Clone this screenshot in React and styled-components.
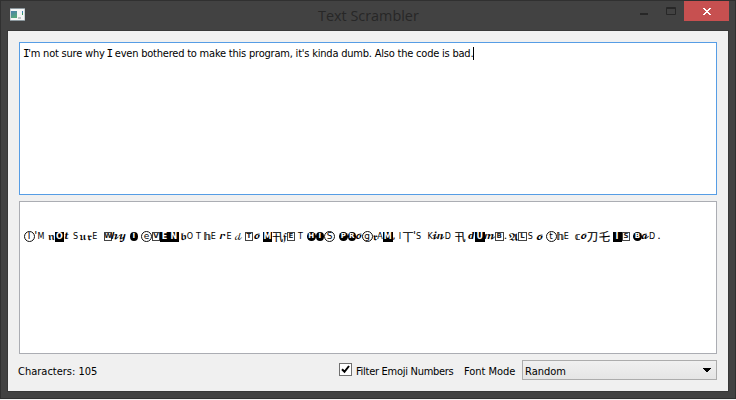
import React from "react";
import styled, { createGlobalStyle, css } from "styled-components";

const Global = createGlobalStyle`
  * { box-sizing: border-box; }
  body { margin: 0; background: #f4f4f4; }
`;

const ui = css`
  font-family: "DejaVu Sans Condensed", "DejaVu Sans", sans-serif;
  font-stretch: condensed;
  font-size: 11px;
  line-height: 14px;
  color: #000;
  white-space: pre;
`;

const Window = styled.div`
  width: 736px;
  height: 399px;
  display: flex;
  flex-direction: column;
  background: #424242;
  border: 1px solid #303030;
  padding: 0 6px 6px;
`;

const TitleBar = styled.header`
  height: 29px;
  display: flex;
  align-items: flex-start;
`;

const AppIcon = styled.svg`
  width: 16px;
  height: 14px;
  margin: 7px 0 0 2px;
`;

const Title = styled.h1`
  flex: 1;
  margin: 0 0 0 293px;
  padding-top: 5px;
  font: 400 14.4px/20px "Open Sans", "Noto Sans", sans-serif;
  color: #272727;
  white-space: nowrap;
`;

const Controls = styled.div`
  display: flex;
  height: 20px;
`;

const ControlButton = styled.button`
  width: ${(p) => p.$w}px;
  height: 20px;
  padding: 0;
  border: 0;
  display: flex;
  background: ${(p) => (p.$close ? "#c75050" : "transparent")};
`;

const Client = styled.main`
  flex: 1;
  display: flex;
  flex-direction: column;
  background: #f0f0f0;
  border: 1px solid #373737;
  padding: 11px 11px 0;
`;

const TextBox = styled.section`
  height: 153px;
  margin-bottom: 6px;
  background: #fff;
  border: 1px solid ${(p) => (p.$focus ? "#569de5" : "#abadb3")};
`;

const Line = styled.div`
  ${ui}
  display: flex;
  padding: 4px 0 0 4px;
  letter-spacing: ${(p) => p.$track}px;
`;

const SerifI = styled.span`
  font-family: "DejaVu Sans Mono", monospace;
  font-size: 11px;
  margin: 0 -1.1px;
`;

const Caret = styled.i`
  width: 1px;
  height: 13px;
  background: #000;
`;

const Scrambled = styled.div`
  display: flex;
  align-items: center;
  height: 14px;
  margin: 27px 0 0 4px;
`;

const script = css`"DejaVu Math TeX Gyre", "Liberation Serif", serif`;

const faces = {
  c: css`font: 8px/10px "DejaVu Sans", sans-serif; padding-top: 3px; height: 14px;`,
  s: css`font: 9px/14px ${script}; height: 14px; padding-top: 1px;`,
  o: css`font: 9.5px/14px ${script}; height: 14px; padding-top: 1px;`,
  f: css`font: 10px/14px ${script}; height: 14px; padding-top: 1px;`,
  d: css`font: 10px/14px "DejaVu Sans", "DejaVu Serif", serif; padding-top: 1px; -webkit-text-stroke: 0.2px #000;`,
  k: css`font: 11px/14px "Noto Sans CJK JP", sans-serif; -webkit-text-stroke: 0.2px #000;`,
  p: css`font: 11px/14px "DejaVu Sans", sans-serif;`,
  O: css`height: 11px; border: 1px solid #111; border-radius: 50%; font: 9px/8px "DejaVu Sans", sans-serif;`,
  N: css`height: 9px; margin-top: 1px; background: #000; color: #fff; border-radius: 50%; font: bold 7px/9px "DejaVu Sans", sans-serif;`,
  B: css`height: 10px; margin-top: 2px; background: #000; color: #fff; font: bold 8px/10px "DejaVu Sans", sans-serif;`,
  Q: css`height: 9px; margin-top: 1px; border: 1px solid #444; color: #222; font: bold 7px/7px "DejaVu Sans", sans-serif;`,
};

const Glyph = styled.span`
  display: flex;
  justify-content: center;
  flex: none;
  width: ${(p) => p.$w}px;
  margin-left: ${(p) => p.$gap}px;
  color: #000;
  ${(p) => faces[p.$face]}
`;

// Each entry: letter, face, start, end (distances along the line).
const glyphs = [
  ["I", "O", 23.5, 34.5], ["'", "p", 34.5, 37], ["M", "c", 37.5, 44.5],
  ["𝖓", "f", 48.5, 54.5], ["O", "B", 55, 64], ["𝒕", "s", 64, 69.5],
  ["S", "c", 73, 78], ["𝖚", "f", 80, 86], ["𝖗", "f", 87, 92], ["E", "c", 92, 97.5],
  ["W", "Q", 104, 112], ["𝓱", "s", 112, 118], ["𝔂", "s", 119, 125],
  ["I", "N", 129.5, 138],
  ["e", "O", 141, 152], ["V", "Q", 152, 160], ["E", "B", 160, 169], ["N", "B", 169, 178.5],
  ["𝖇", "f", 181, 186.5], ["O", "c", 187, 193], ["T", "c", 196, 201], ["𝕙", "d", 204, 210.5],
  ["E", "c", 211, 215.5], ["𝓻", "s", 219, 226], ["E", "c", 227, 231], ["𝒹", "o", 235, 242],
  ["T", "Q", 245, 253], ["𝓸", "s", 253.5, 260.5],
  ["M", "B", 263, 272], ["卂", "k", 272, 283], ["𝖋", "f", 283, 287], ["E", "Q", 287, 295],
  ["T", "c", 298, 303], ["H", "N", 307, 315.5], ["I", "N", 315.5, 324], ["S", "O", 324, 335],
  ["P", "N", 339, 347.5], ["R", "N", 347.5, 356], ["𝓸", "s", 356, 361.5], ["g", "O", 361.5, 372.5],
  ["𝖗", "f", 373, 377.5], ["A", "c", 377.5, 382.5], ["M", "B", 383, 392.5], [",", "p", 392.5, 395.5],
  ["I", "c", 398, 402], ["丅", "k", 402.5, 413.5], ["'", "p", 413, 416], ["S", "c", 416, 421],
  ["K", "c", 427.5, 432.5], ["𝓲", "s", 433, 437], ["𝓷", "s", 437.5, 444], ["D", "c", 445, 450.5],
  ["卂", "k", 454.5, 465.5],
  ["𝒅", "s", 468, 474.5], ["U", "B", 475, 484.5], ["𝓶", "s", 485, 494.5], ["B", "Q", 495, 503.5],
  [".", "p", 504, 507],
  ["𝕬", "f", 510, 517], ["L", "Q", 518, 527], ["S", "c", 528, 532.5], ["𝓸", "o", 536, 543.5],
  ["t", "O", 545.5, 556.5], ["𝕙", "d", 557, 563.5], ["E", "c", 564, 568.5],
  ["𝕔", "d", 575, 580], ["𝓸", "s", 580.5, 587], ["刀", "k", 587, 598], ["乇", "k", 599, 610],
  ["I", "B", 612.5, 621.5], ["S", "Q", 622, 630],
  ["B", "N", 633, 642], ["𝓪", "s", 642, 648.5], ["D", "c", 649, 655], [".", "p", 657.5, 660.5],
].map(([letter, face, start, end], i, all) => ({
  letter, face, w: end - start, gap: start - (i ? all[i - 1][3] : 24),
}));

const Footer = styled.footer`
  ${ui}
  height: 20px;
  display: flex;
  align-items: center;
`;

const Label = styled.span`
  width: ${(p) => p.$w}px;
  padding-top: 3px;
  margin-left: ${(p) => p.$shift || 0}px;
  letter-spacing: ${(p) => p.$track || 0}px;
`;

const CheckBox = styled.span`
  width: 13px;
  height: 13px;
  margin: 0 4px 1px 0;
  border: 1px solid #707070;
  background: #fff;
  display: flex;
`;

const Combo = styled.div`
  width: 195px;
  height: 20px;
  display: flex;
  align-items: center;
  justify-content: space-between;
  padding: 0 5px 0 2px;
  border: 1px solid #acacac;
  background: linear-gradient(#f0f0f0, #e5e5e5);
`;

export default function App() {
  return (
    <>
      <Global />
      <Window>
        <TitleBar>
          <AppIcon viewBox="0 0 16 14">
            <defs>
              <linearGradient id="pane" x2="0.4" y2="1">
                <stop stopColor="#497fae" />
                <stop offset="1" stopColor="#55a67a" />
              </linearGradient>
            </defs>
            <path fill="#f4f5f5" d="M1 0h15v13H1z" />
            <path fill="#8b979d" d="M1 0h15v1H1zM1 12h15v1H1z" />
            <path fill="#c9cfd2" d="M1 1h1v11H1zM15 1h1v11h-1z" />
            <path fill="url(#pane)" d="M2 3h6v7H2z" />
            <path fill="#bfc3c6" d="M9 9h3v2H9z" />
            <path fill="#3c7fb0" d="M13 3h1v2h-1z" />
            <path fill="#3f9c62" d="M13 5h1v2h-1z" />
          </AppIcon>
          <Title>Text Scrambler</Title>
          <Controls>
            <ControlButton $w={25} aria-label="Minimize">
              <svg width="25" height="20"><path fill="#272727" d="M0 12h8v2H0z" /></svg>
            </ControlButton>
            <ControlButton $w={19} aria-label="Maximize">
              <svg width="19" height="20"><path fill="none" stroke="#272727" d="M1.5 6.5h9v7h-9zM1 7.5h10" /></svg>
            </ControlButton>
            <ControlButton $w={45} $close aria-label="Close">
              <svg width="45" height="20" shapeRendering="crispEdges">
                <path fill="#fff" d="M19 7h2v1h1v1h2V8h1V7h2v1h-1v1h-1v1h-1v1h1v1h1v1h1v1h-2v-1h-1v-1h-2v1h-1v1h-2v-1h1v-1h1v-1h1v-1h-1V9h-1V8h-1z" />
              </svg>
            </ControlButton>
          </Controls>
        </TitleBar>
        <Client>
          <TextBox $focus>
            <Line $track={-0.21}>
              <span><SerifI>I</SerifI>'m not sure why <SerifI>I</SerifI> even bothered to make this program, it's kinda dumb. Also the code is bad.</span>
              <Caret />
            </Line>
          </TextBox>
          <TextBox>
            <Scrambled>
              {glyphs.map((g, i) => (
                <Glyph key={i} $face={g.face} $w={g.w} $gap={g.gap}>{g.letter}</Glyph>
              ))}
            </Scrambled>
          </TextBox>
          <Footer>
            <Label $w={321} $shift={-1}>Characters: 105</Label>
            <CheckBox>
              <svg width="11" height="11"><path fill="none" stroke="#000" strokeWidth="2" d="M2 5.2l2.5 2.6L9 2" /></svg>
            </CheckBox>
            <Label $w={108} $track={-0.28}>Filter Emoji Numbers</Label>
            <Label $w={58} $track={-0.05}>Font Mode</Label>
            <Combo>
              <Label $w={100}>Random</Label>
              <svg width="8" height="5" shapeRendering="crispEdges"><path d="M0 0h8v1H7v1H6v1H5v1H3V3H2V2H1V1H0z" /></svg>
            </Combo>
          </Footer>
        </Client>
      </Window>
    </>
  );
}
